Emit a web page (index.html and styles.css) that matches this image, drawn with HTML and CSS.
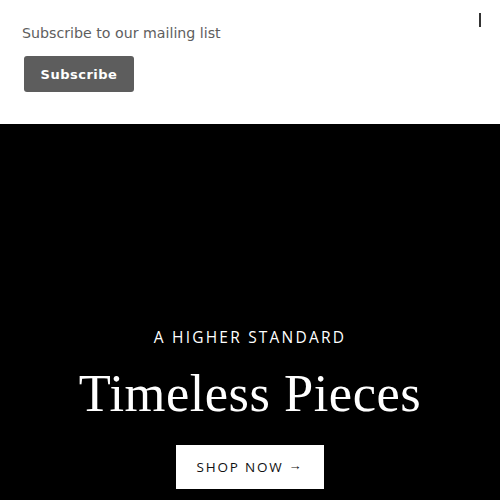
FILE: index.html
```html
<!DOCTYPE html>
<html lang="en">
<head>
  <meta charset="UTF-8" />
  <meta name="viewport" content="width=device-width, initial-scale=1.0"/>
  <title>Timeless Pieces</title>
  <link rel="stylesheet" href="styles.css">
</head>
<body>

  <div class="signup">
    <span class="close"></span>
    <p class="signup-text">Subscribe to our mailing list</p>
    <button class="signup-btn">Subscribe</button>
  </div>

  <div class="hero">
    <p class="eyebrow">A HIGHER STANDARD</p>
    <h1>Timeless Pieces</h1>
    <a class="shop-btn" href="#">SHOP NOW<span class="arrow">&rarr;</span></a>
  </div>

</body>
</html>
```

FILE: styles.css
```css
* {
  margin: 0; padding: 0; box-sizing: border-box;
}
body {
  font-family: "DejaVu Sans", sans-serif;
  background: #000;
  width: 500px;
  height: 500px;
  overflow: hidden;
}
.signup {
  position: relative;
  background: #fff;
  height: 124px;
  padding: 23px 22px 0;
}
.close {
  position: absolute;
  top: 13px;
  left: 479px;
  width: 2px;
  height: 14px;
  background: #333;
}
.signup-text {
  font-size: 14.2px;
  color: #5e5e5e;
  line-height: 20px;
}
.signup-btn {
  margin: 13px 0 0 2px;
  width: 110px;
  height: 36px;
  background: #5d5d5d;
  color: #fff;
  border: none;
  border-radius: 3px;
  font-family: "DejaVu Sans", sans-serif;
  font-weight: bold;
  font-size: 13px;
  letter-spacing: 0.5px;
}
.hero {
  display: flex;
  flex-direction: column;
  align-items: center;
  padding-top: 203px;
  color: #fff;
}
.eyebrow {
  font-family: "Open Sans", sans-serif;
  font-size: 15.5px;
  letter-spacing: 2.2px;
  line-height: 20px;
}
h1 {
  font-family: "Liberation Serif", serif;
  font-weight: normal;
  font-size: 52.5px;
  line-height: 60px;
  margin-top: 16px;
  letter-spacing: 0.5px;
}
.shop-btn {
  margin-top: 22px;
  display: flex;
  align-items: center;
  justify-content: center;
  width: 148px;
  height: 44px;
  background: #fff;
  color: #111;
  text-decoration: none;
  font-family: "Open Sans", sans-serif;
  font-size: 13.5px;
  letter-spacing: 1.8px;
}
.arrow {
  margin-left: 5px;
  font-size: 13px;
  position: relative;
  top: -2px;
}
```
